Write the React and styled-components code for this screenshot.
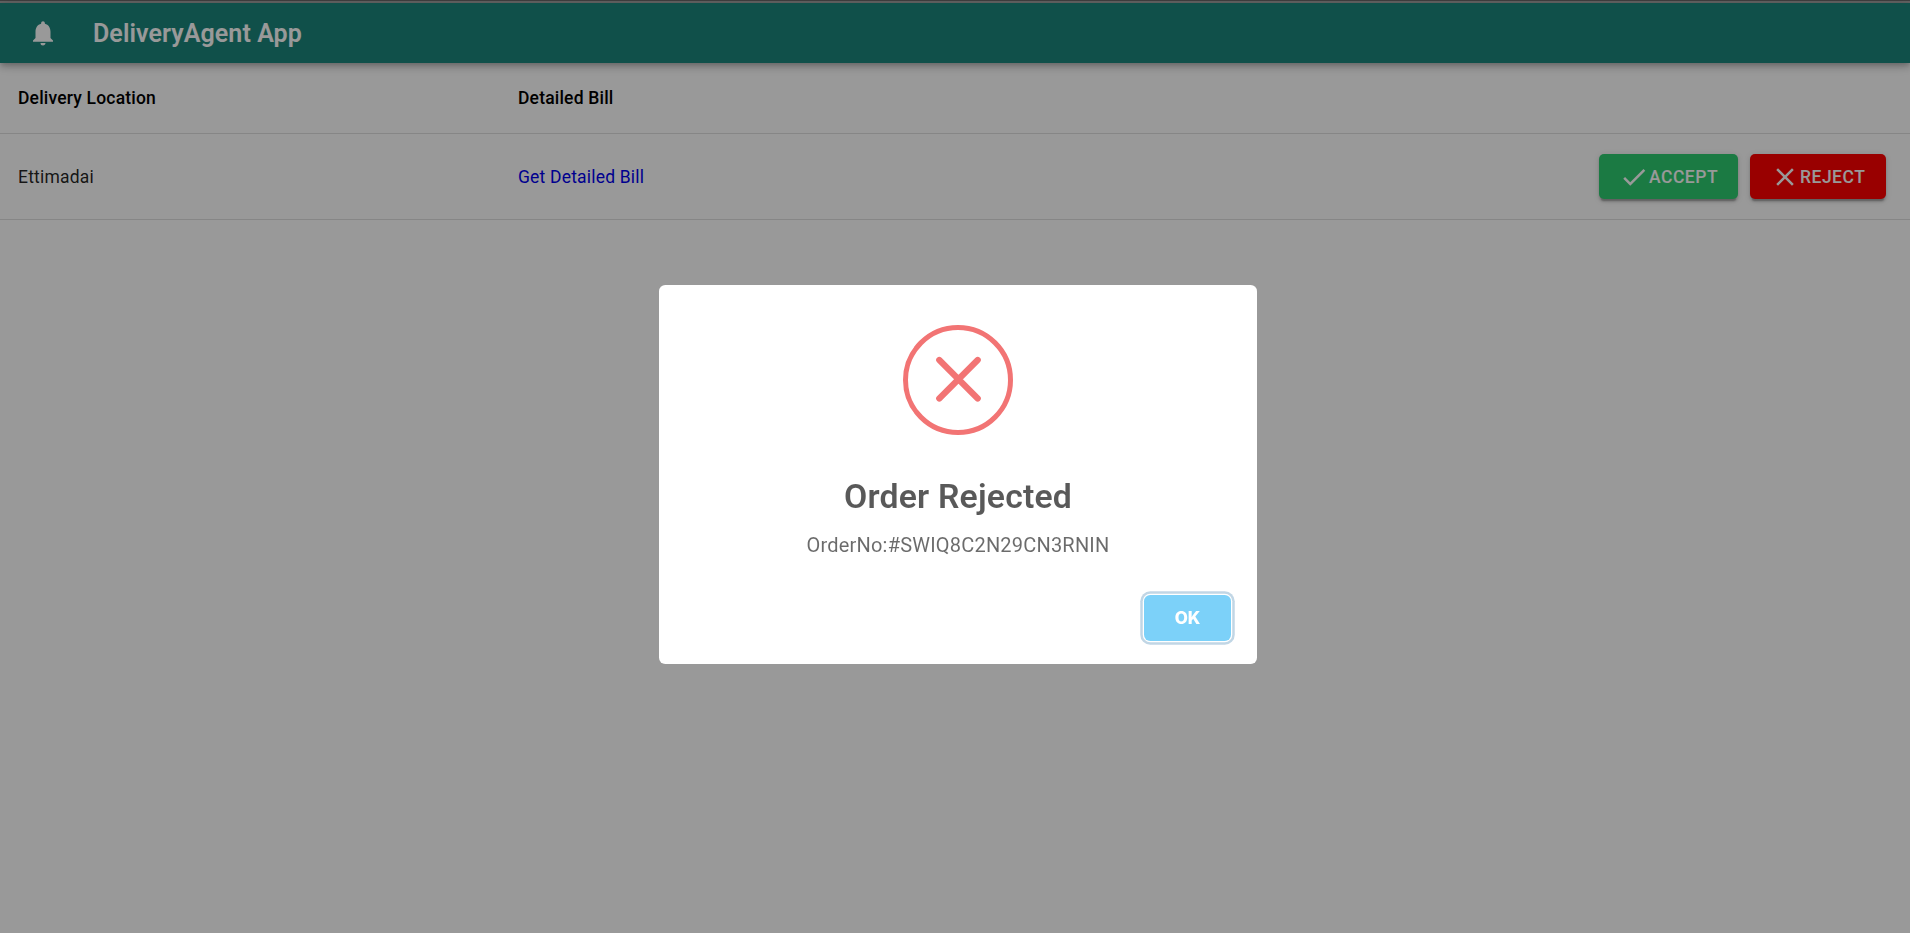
import React from 'react';
import styled, { createGlobalStyle } from 'styled-components';
import { MdNotifications, MdCheck, MdClose } from 'react-icons/md';

const GlobalStyle = createGlobalStyle`
  html, body { margin: 0; height: 100%; overflow: hidden; }
  *, *::before, *::after { box-sizing: border-box; }
  body { background: #fff; font-family: Roboto, "Liberation Sans", sans-serif; }
`;

const Page = styled.div`
  height: 100vh;
  display: flex;
  flex-direction: column;
  border-top: 1px solid #696969;
`;

const TopLine = styled.div`
  flex: none;
  height: 2px;
  background: #a3a3a3;
`;

const AppBar = styled.header`
  flex: none;
  height: 60px;
  display: flex;
  align-items: center;
  gap: 35px;
  padding-left: 28px;
  background: #1c867c;
  color: #fff;
  position: relative;
  box-shadow: 0 2.5px 5px -1.25px rgba(0, 0, 0, 0.2), 0 5px 6.25px rgba(0, 0, 0, 0.14),
    0 1.25px 12.5px rgba(0, 0, 0, 0.12);
`;

const AppTitle = styled.h1`
  margin: 2px 0 0;
  font-size: 25px;
  font-weight: 600;
  line-height: 40px;
  letter-spacing: 0.003em;
`;

const Row = styled.div`
  flex: none;
  height: ${(p) => (p.$head ? 71 : 86)}px;
  display: grid;
  grid-template-columns: 500px 1fr auto;
  align-items: center;
  padding: 0 24px 0 18px;
  border-bottom: 1px solid #e0e0e0;
  font-size: 17.5px;
  font-weight: ${(p) => (p.$head ? 500 : 400)};
  letter-spacing: 0.01071em;
  color: rgba(0, 0, 0, ${(p) => (p.$head ? 1 : 0.87)});
`;

const BillLink = styled.a`
  color: #0000ee;
  text-decoration: none;
`;

const Actions = styled.div`
  display: flex;
  gap: 12px;
`;

const ActionButton = styled.button`
  display: flex;
  align-items: center;
  justify-content: flex-start;
  width: ${(p) => p.$width}px;
  height: 45px;
  padding: 0 0 0 20px;
  border: 0;
  border-radius: 5px;
  background: ${(p) => p.$color};
  color: #fff;
  font: 500 17.5px Roboto, sans-serif;
  letter-spacing: 0.02857em;
  text-transform: uppercase;
  box-shadow: 0 3.75px 1.25px -2.5px rgba(0, 0, 0, 0.2), 0 2.5px 2.5px rgba(0, 0, 0, 0.14),
    0 1.25px 6.25px rgba(0, 0, 0, 0.12);
`;

const Overlay = styled.div`
  position: fixed;
  inset: 0;
  display: flex;
  align-items: flex-start;
  justify-content: center;
  padding: 285px 0 0 6px;
  background: rgba(0, 0, 0, 0.4);
`;

const Modal = styled.div`
  width: 598px;
  height: 379px;
  display: flex;
  flex-direction: column;
  align-items: center;
  padding-top: 40px;
  border-radius: 6.25px;
  background: #fff;
  will-change: transform;
`;

const ErrorIcon = styled.svg`
  flex: none;
  width: 110px;
  height: 110px;
`;

const ModalTitle = styled.h2`
  margin: 42px 0 0;
  font-size: 33.75px;
  font-weight: 600;
  line-height: 40px;
  letter-spacing: 0.2px;
  color: rgba(0, 0, 0, 0.65);
`;

const ModalText = styled.p`
  margin: 17px 0 0;
  font-size: 20px;
  line-height: 23px;
  letter-spacing: 0.2px;
  color: rgba(0, 0, 0, 0.58);
`;

const OkButton = styled.button`
  align-self: flex-end;
  margin: 38px 26px 0 0;
  width: 87px;
  height: 46px;
  border: 0;
  border-radius: 6.25px;
  background: #7cd1f9;
  color: #fff;
  font: 800 17px Inter, sans-serif;
  box-shadow: 0 0 0 1.25px #fff, 0 0 0 3.75px rgba(43, 114, 165, 0.29);
`;

export default function App() {
  return (
    <>
      <GlobalStyle />
      <Page>
        <TopLine />
        <AppBar>
          <MdNotifications size={30} />
          <AppTitle>DeliveryAgent App</AppTitle>
        </AppBar>
        <Row $head>
          <span>Delivery Location</span>
          <span>Detailed Bill</span>
        </Row>
        <Row>
          <span>Ettimadai</span>
          <span>
            <BillLink href="#">Get Detailed Bill</BillLink>
          </span>
          <Actions>
            <ActionButton $color="#2ecc71" $width={139}>
              <MdCheck size={30} />
              Accept
            </ActionButton>
            <ActionButton $color="#ff0000" $width={136}>
              <MdClose size={30} />
              Reject
            </ActionButton>
          </Actions>
        </Row>
      </Page>
      <Overlay>
        <Modal role="dialog">
          <ErrorIcon viewBox="0 0 110 110" fill="none" stroke="#f27474">
            <circle cx="55" cy="55" r="52.5" strokeWidth="5" />
            <path d="M36.3 35L74.7 73.5M74.7 35L36.3 73.5" strokeWidth="6.25" strokeLinecap="round" />
          </ErrorIcon>
          <ModalTitle>Order Rejected</ModalTitle>
          <ModalText>OrderNo:#SWIQ8C2N29CN3RNIN</ModalText>
          <OkButton>OK</OkButton>
        </Modal>
      </Overlay>
    </>
  );
}
